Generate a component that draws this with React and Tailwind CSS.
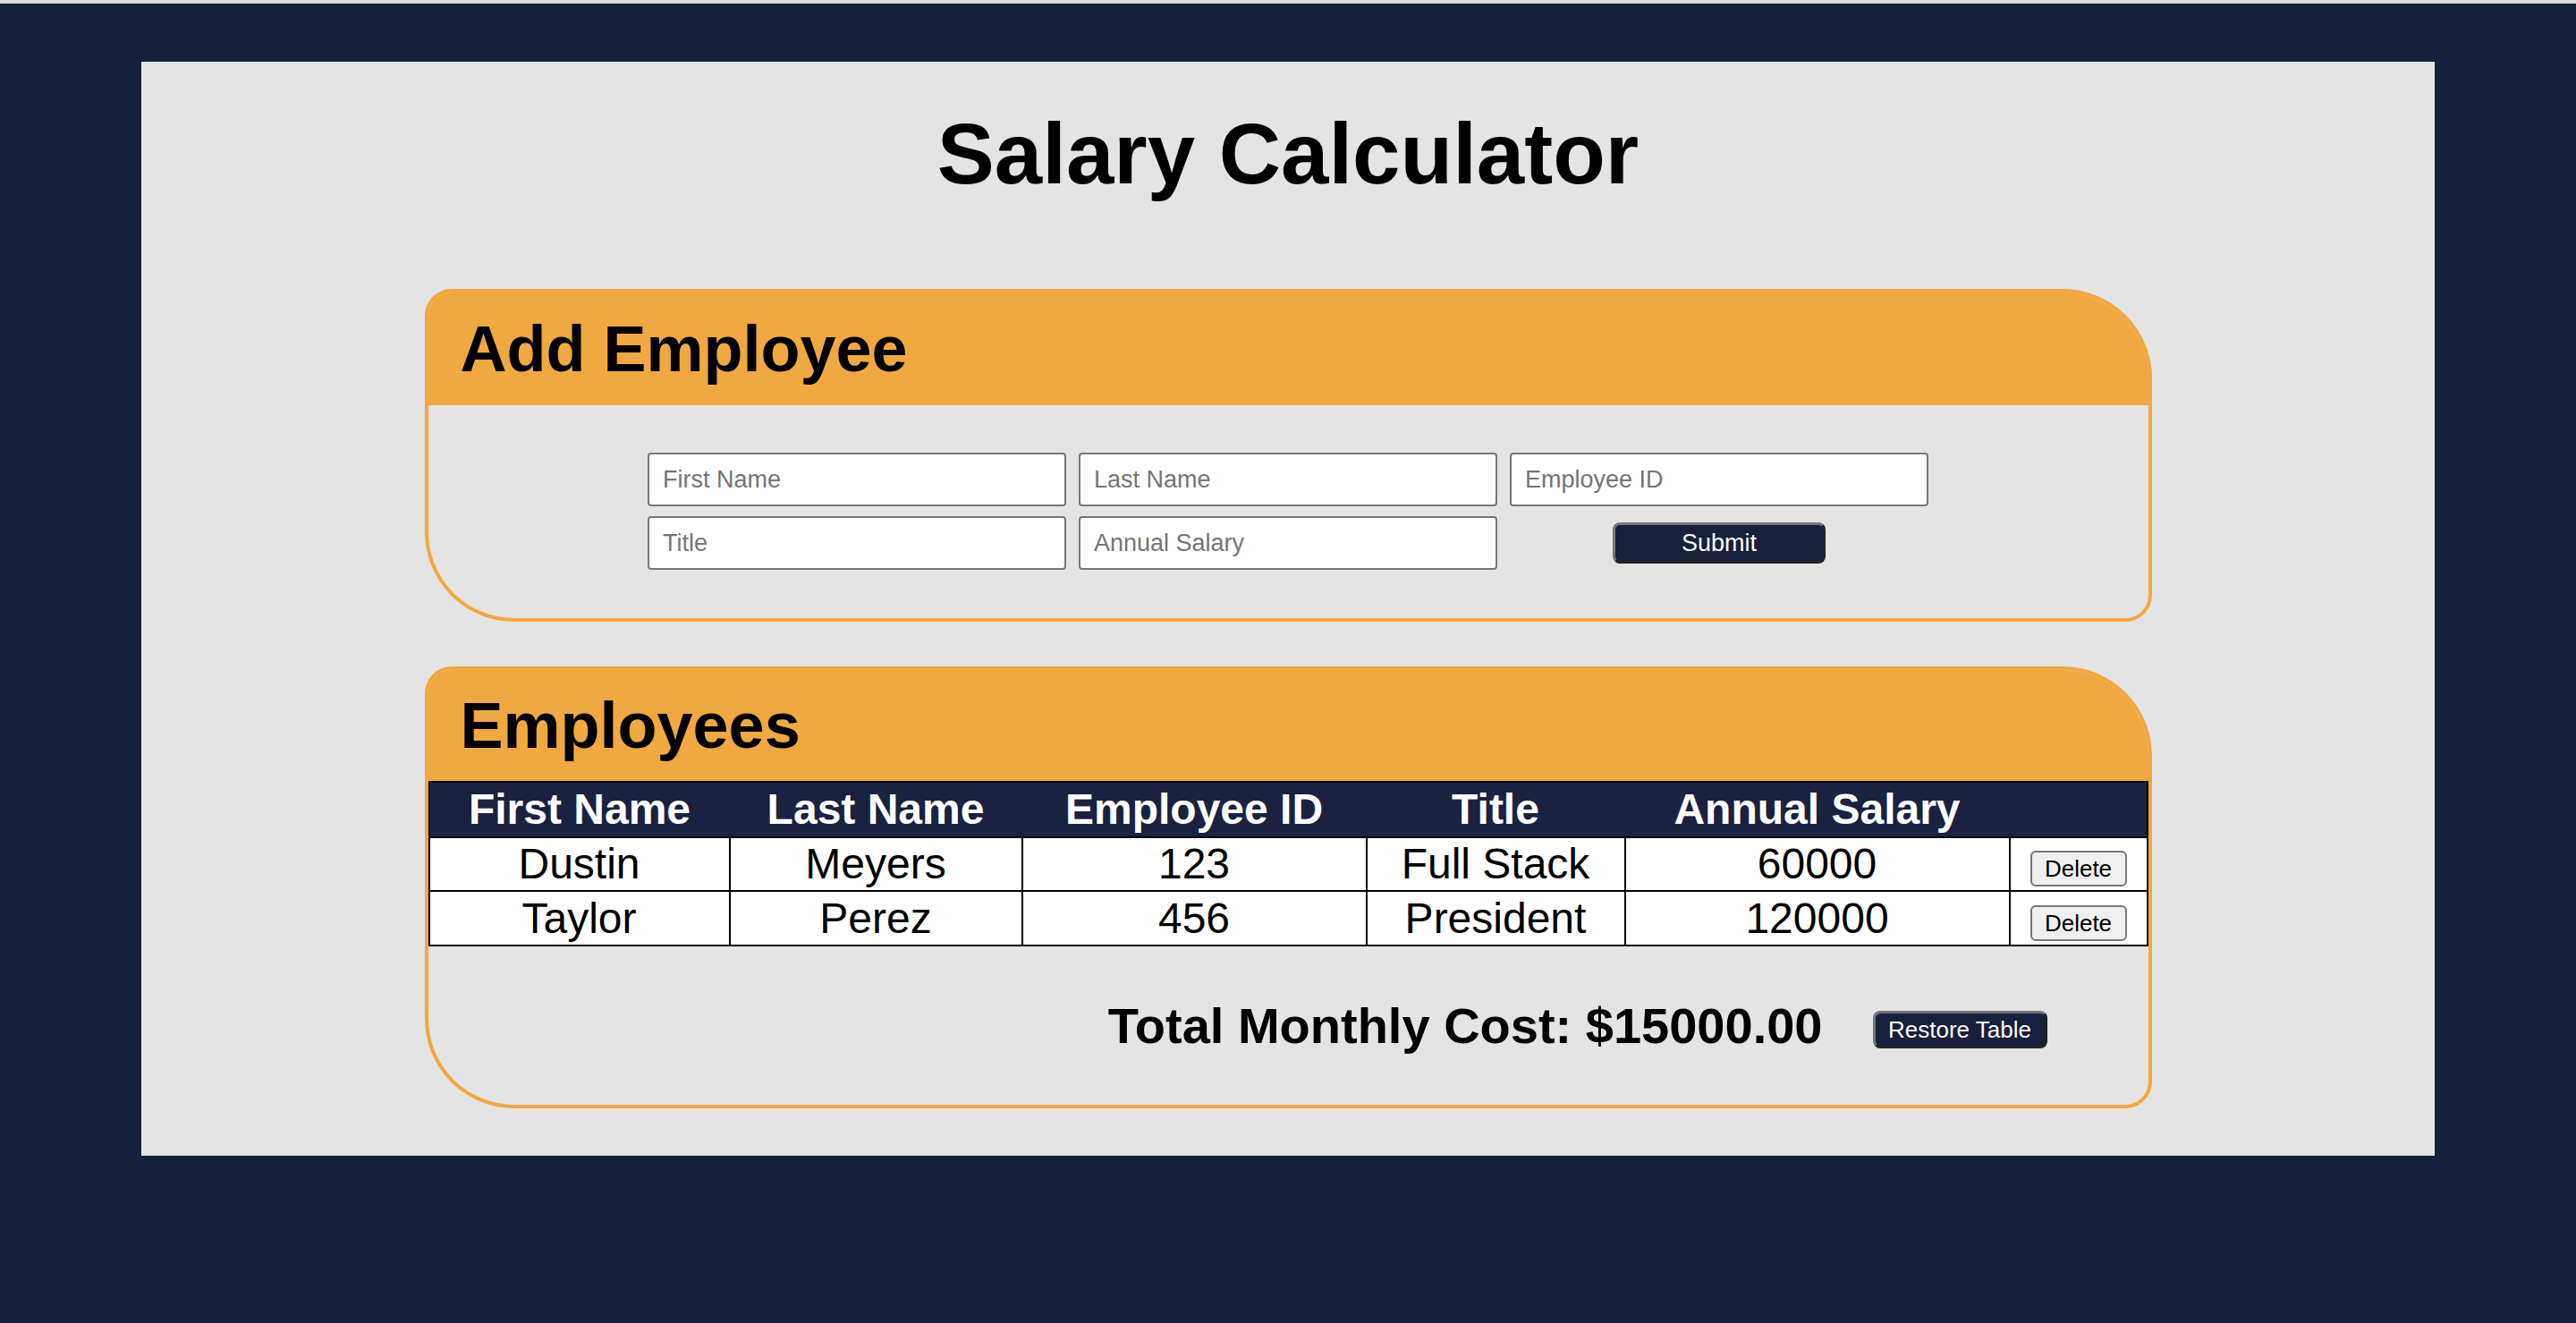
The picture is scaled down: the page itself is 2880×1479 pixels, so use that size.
import React from 'react';

const employees = [
  { first: 'Dustin', last: 'Meyers', id: '123', title: 'Full Stack', salary: '60000' },
  { first: 'Taylor', last: 'Perez', id: '456', title: 'President', salary: '120000' },
];

// column widths measured off the table
const cols = ['w-[336px]', 'w-[327px]', 'w-[385px]', 'w-[289px]', 'w-[430px]', 'w-[154px]'];

function Card({ title, headerHeight, children, className = '' }) {
  return (
    <section
      className={`mx-auto w-[1931px] border-[4px] border-[#f0a840] rounded-[30px_100px_30px_100px] overflow-hidden ${className}`}
    >
      <div className={`${headerHeight} bg-[#f0a840] flex items-center pl-[36px]`}>
        <h2 className="text-[72px] font-bold leading-none text-black">{title}</h2>
      </div>
      {children}
    </section>
  );
}

const navyBtn =
  'bg-[#18203b] text-white rounded-[8px] border-[3px] border-t-[#767676] border-l-[#767676] border-b-[#222222] border-r-[#222222] leading-none';

export default function App() {
  return (
    <div
      className="min-h-screen bg-[#17203b]"
      style={{ fontFamily: '"Liberation Sans", Arial, Helvetica, sans-serif' }}
    >
      <div className="h-[4px] bg-[#dcdcdc]" />
      <main className="mt-[65px] mx-auto w-[2564px] bg-[#e4e4e4] pb-[53px]">
        <h1 className="pt-[55px] text-center text-[96px] leading-[96px] font-bold text-black">
          Salary Calculator
        </h1>

        {/* add employee form */}
        <Card title="Add Employee" headerHeight="h-[126px]" className="mt-[103px]">
          <form
            className="pt-[53px] pb-[54px] grid grid-cols-[468px_468px_468px] justify-center gap-x-[14px] gap-y-[11px]"
            onSubmit={(e) => e.preventDefault()}
          >
            {['First Name', 'Last Name', 'Employee ID', 'Title', 'Annual Salary'].map((p) => (
              <input
                key={p}
                placeholder={p}
                className="h-[60px] w-[468px] bg-white border-2 border-[#767676] rounded-[4px] pl-[15px] text-[27px] text-black placeholder:text-[#757575] outline-none"
              />
            ))}
            <div className="flex items-center justify-center">
              <button type="submit" className={`w-[238px] h-[46px] text-[27px] ${navyBtn}`}>
                Submit
              </button>
            </div>
          </form>
        </Card>

        {/* employee table */}
        <Card title="Employees" headerHeight="h-[124px]" className="mt-[50px]">
          <table className="w-[1921px] border-collapse border-2 border-black table-fixed">
            <thead>
              <tr className="h-[62px] bg-[#1a2240] text-white">
                {['First Name', 'Last Name', 'Employee ID', 'Title', 'Annual Salary', ''].map((h, i) => (
                  <th key={i} className={`${cols[i]} text-[48px] font-bold leading-none text-center`}>
                    {h}
                  </th>
                ))}
              </tr>
            </thead>
            <tbody>
              {employees.map((emp, r) => (
                <tr key={emp.id} className={`${r === 0 ? 'h-[60px]' : 'h-[61px]'} bg-white`}>
                  {[emp.first, emp.last, emp.id, emp.title, emp.salary].map((v, i) => (
                    <td key={i} className="border-2 border-black text-center text-[48px] leading-none text-black">
                      {v}
                    </td>
                  ))}
                  <td className="border-2 border-black text-center align-middle">
                    <button className="mt-[10px] w-[108px] h-[40px] text-[26px] leading-none text-black bg-[#efefef] border-2 border-[#767676] rounded-[6px]">
                      Delete
                    </button>
                  </td>
                </tr>
              ))}
            </tbody>
          </table>
          <div className="h-[177px] flex items-center justify-end gap-[56px] pr-[113px]">
            <h3 className="text-[56px] font-bold leading-none text-black">Total Monthly Cost: $15000.00</h3>
            <button className={`mt-[9px] w-[195px] h-[42px] text-[26px] ${navyBtn}`}>Restore Table</button>
          </div>
        </Card>
      </main>
    </div>
  );
}
